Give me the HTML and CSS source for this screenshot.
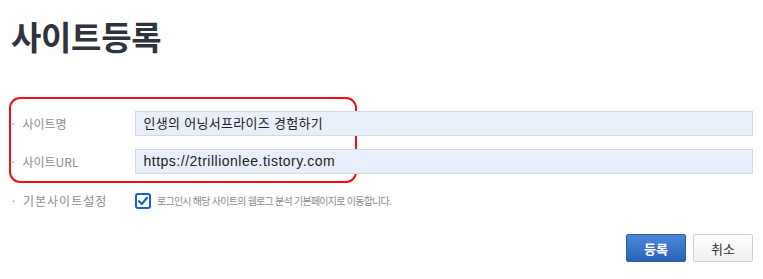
FILE: index.html
```html
<!DOCTYPE html>
<html lang="ko">
<head>
<meta charset="utf-8">
<link rel="stylesheet" href="styles.css">
</head>
<body>
<div class="page">
  <h1 class="title">사이트등록</h1>
  <div class="form">
    <div class="highlight">
      <div class="row">
        <div class="label"><span class="dot">·</span>사이트명</div>
        <div class="field">인생의 어닝서프라이즈 경험하기</div>
      </div>
      <div class="row">
        <div class="label"><span class="dot">·</span>사이트URL</div>
        <div class="field url">https://2trillionlee.tistory.com</div>
      </div>
    </div>
    <div class="row row-check">
      <div class="label spaced"><span class="dot">·</span>기본사이트설정</div>
      <div class="check-wrap">
        <span class="checkbox">
          <svg width="12" height="12" viewBox="0 0 12 12"><path d="M2 6.2 L4.8 9 L10 2.8" fill="none" stroke="#1a5fc9" stroke-width="2.2" stroke-linecap="round" stroke-linejoin="round"/></svg>
        </span>
        <span class="desc">로그인시 해당 사이트의 웹로그 분석 기본페이지로 이동합니다.</span>
      </div>
    </div>
  </div>
  <div class="buttons">
    <button class="btn primary">등록</button>
    <button class="btn">취소</button>
  </div>
</div>
</body>
</html>
```
FILE: styles.css
```css
html, body { margin: 0; padding: 0; background: #fff; }
body { font-family: "Noto Sans CJK KR", "Noto Sans", sans-serif; width: 763px; height: 279px; overflow: hidden; }
.title {
  margin: 0;
  padding: 13px 0 0 11px;
  height: 50px;
  font-size: 33px;
  line-height: 46px;
  font-weight: 700;
  color: #2e333d;
  letter-spacing: -0.3px;
}
.form { padding: 34px 10px 0 9px; }
.highlight {
  border: 2.5px solid #f20d17;
  border-radius: 11px;
  width: 348px;
  height: 86px;
  box-sizing: border-box;
  padding-top: 12px;
}
.row { display: flex; align-items: center; height: 25px; width: 744px; margin-left: -2.5px; }
.highlight .row + .row { margin-top: 13px; }
.label {
  width: 126px;
  flex: none;
  font-size: 12px;
  color: #8c8c8c;
  padding-left: 3px;
  box-sizing: border-box;
  white-space: nowrap;
}
.dot { display: inline-block; width: 11px; color: #a0a0a0; letter-spacing: 0; }
.field {
  width: 618px;
  height: 25px;
  box-sizing: border-box;
  background: #e8effb;
  border: 1px solid #d6d9de;
  font-size: 13px;
  line-height: 23px;
  color: #222;
  padding-left: 8px;
  white-space: nowrap;
  font-family: "Liberation Sans", "Noto Sans CJK KR", sans-serif;
  letter-spacing: 0.3px;
}
.field.url { font-size: 14px; letter-spacing: 0.5px; }
.row-check { margin-top: 5px; margin-left: 0; }
.spaced { letter-spacing: 1px; padding-left: 3px; }
.check-wrap { display: flex; align-items: center; gap: 6px; }
.checkbox {
  width: 16px; height: 16px;
  box-sizing: border-box;
  border: 2px solid #1a5fc9;
  border-radius: 3px;
  display: flex; align-items: center; justify-content: center;
  background: #fff;
}
.desc { font-size: 10px; color: #8c8c8c; letter-spacing: -0.75px; white-space: nowrap; }
.buttons { display: flex; justify-content: flex-end; gap: 7px; padding: 21px 10px 0 0; }
.btn {
  width: 60px; height: 28px;
  font-family: "Noto Sans CJK KR", sans-serif;
  font-size: 13px;
  border-radius: 2px;
  border: 1px solid #cfcfcf;
  background: linear-gradient(#ffffff, #f1f1f1);
  color: #333;
  padding: 0;
  cursor: pointer;
}
.btn.primary {
  background: linear-gradient(#4b88d8, #2c62b5);
  border-color: #2a5ca8;
  color: #fff;
  font-weight: 700;
}
```
